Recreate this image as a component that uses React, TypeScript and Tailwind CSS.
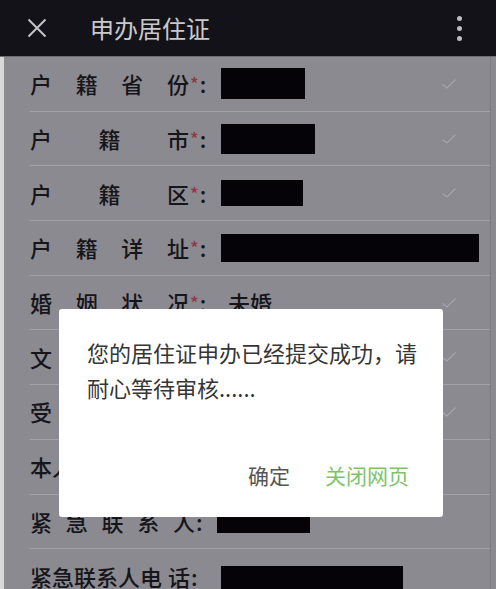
import React from 'react';

type Row = {
  chars: string[];
  width: number;
  required?: boolean;
  value?: React.ReactNode;
  check?: boolean;
};

const Redacted = ({ w, h }: { w: number; h: number }) => (
  <div className="bg-[#050308]" style={{ width: w, height: h }} />
);

// rows 6-8 sit mostly under the dialog, only their first characters show
const rows: Row[] = [
  { chars: ['户', '籍', '省', '份'], width: 159, required: true, value: <Redacted w={84} h={31} />, check: true },
  { chars: ['户', '籍', '市'], width: 159, required: true, value: <Redacted w={94} h={30} />, check: true },
  { chars: ['户', '籍', '区'], width: 159, required: true, value: <Redacted w={82} h={26} />, check: true },
  { chars: ['户', '籍', '详', '址'], width: 159, required: true, value: <Redacted w={258} h={28} /> },
  { chars: ['婚', '姻', '状', '况'], width: 159, required: true, value: <span className="ml-[7px]">未婚</span>, check: true },
  { chars: ['文'], width: 159, check: true },
  { chars: ['受'], width: 159, check: true },
  { chars: ['本人'], width: 160 },
  { chars: ['紧', '急', '联', '系', '人'], width: 165, value: <div className="-ml-[4px] mt-[4px]"><Redacted w={93} h={19} /></div> },
  { chars: ['紧急联系人电', '话'], width: 160, value: <div className="mt-[8px]"><Redacted w={182} h={28} /></div> },
];

const Check = () => (
  <svg width="16" height="12" viewBox="0 0 16 12" className="shrink-0">
    <path d="M1.5 6.5 L6 10 L14.5 1.5" fill="none" stroke="#a6a5ab" strokeWidth="1.2" />
  </svg>
);

export default function App() {
  return (
    <div className="relative w-[496px] h-[589px] overflow-hidden bg-[#8b8a90] font-['Noto_Sans_CJK_SC','Noto_Sans',sans-serif]">
      {/* top bar */}
      <div className="h-[57px] bg-[#141219] flex items-center border-b border-[#6e6d73]">
        <svg width="20" height="20" viewBox="0 0 20 20" className="ml-[27px]">
          <path d="M1.5 1.5 L18.5 18.5 M18.5 1.5 L1.5 18.5" stroke="#c4c4c6" strokeWidth="2" />
        </svg>
        <span className="ml-[43px] text-[24px] text-[#c9c9cb]">申办居住证</span>
        <div className="ml-auto mr-[34px] flex flex-col gap-[5px]">
          <span className="w-[5px] h-[5px] rounded-full bg-[#bdbdbf]" />
          <span className="w-[5px] h-[5px] rounded-full bg-[#bdbdbf]" />
          <span className="w-[5px] h-[5px] rounded-full bg-[#bdbdbf]" />
        </div>
      </div>

      {/* form, dimmed */}
      <div className="flex">
        <div className="w-[4px] bg-[#d8d8da] shrink-0" />
        <div className="flex-1 border-r border-[#7d7c82] mr-[5px]">
          {rows.map((r, i) => {
            const hidden = i >= 5 && i <= 7;
            return (
              <div
                key={i}
                className="ml-[26px] h-[54.7px] flex items-center border-b border-[#a3a2a7] text-[22px] font-medium text-[#16151a]"
              >
                <div className="w-[191px] flex items-center shrink-0">
                  <div className={hidden ? 'flex' : 'flex justify-between'} style={{ width: r.width }}>
                    {r.chars.map((c, j) => (
                      <span key={j}>{c}</span>
                    ))}
                  </div>
                  {r.required && <span className="text-[#93354a] text-[18px] ml-[1px]">*</span>}
                  {!hidden && <span className="ml-[1px]">:</span>}
                </div>
                <div className="flex-1 flex items-center">{r.value}</div>
                {r.check && (
                  <div className="mr-[33px]">
                    <Check />
                  </div>
                )}
              </div>
            );
          })}
        </div>
      </div>

      {/* dialog */}
      <div className="absolute left-[59px] top-[309px] w-[384px] h-[208px] bg-white rounded-[3px] flex flex-col">
        <p className="pl-[28px] pr-[20px] pt-[26px] text-[22px] leading-[35px] text-[#353535]">
          您的居住证申办已经提交成功，请耐心等待审核......
        </p>
        <div className="mt-auto pb-[27px] pr-[34px] flex justify-end gap-[35px] text-[21px] leading-[30px]">
          <span className="text-[#555555]">确定</span>
          <span className="text-[#7fc36b]">关闭网页</span>
        </div>
      </div>
    </div>
  );
}
